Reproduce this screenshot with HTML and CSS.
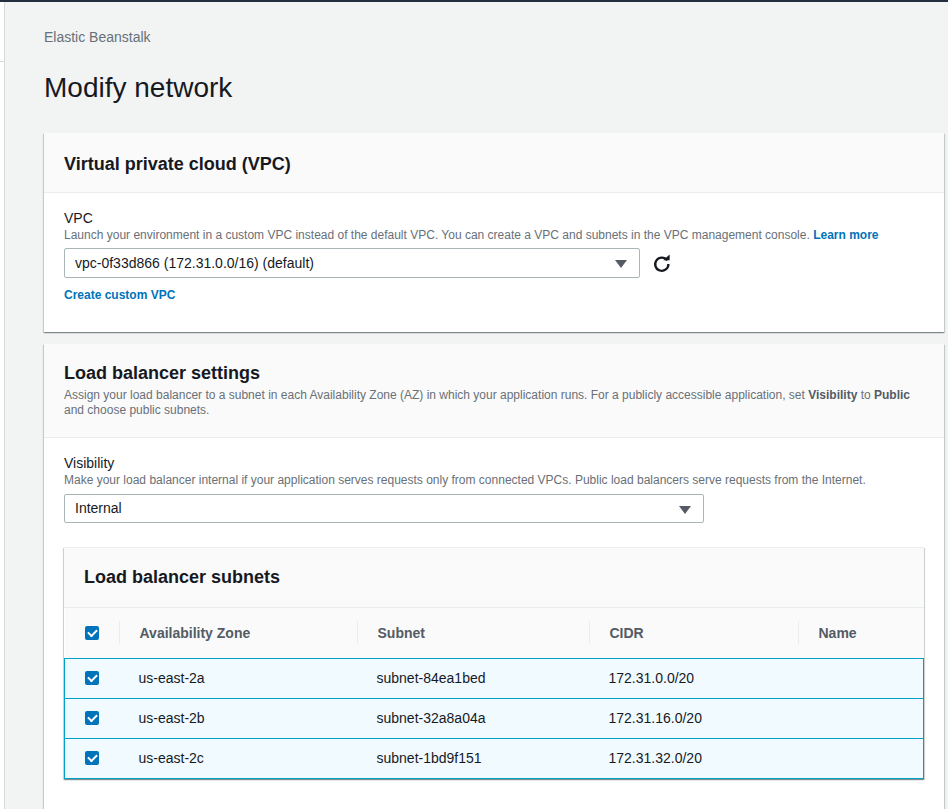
FILE: index.html
```html
<!DOCTYPE html>
<html lang="en">
<head>
<meta charset="utf-8">
<title>Modify network</title>
<link rel="stylesheet" href="styles.css">
</head>
<body>
<div class="topbar"></div>
<div class="layout">
  <aside class="sidenav"><div class="sidenav-top"></div></aside>
  <main class="main">
    <div class="breadcrumb">Elastic Beanstalk</div>
    <h1 class="page-title">Modify network</h1>

    <section class="card">
      <div class="card-header">
        <h2 class="card-title">Virtual private cloud (VPC)</h2>
      </div>
      <div class="card-body card-body-vpc">
        <div class="field-label">VPC</div>
        <div class="field-desc">Launch your environment in a custom VPC instead of the default VPC. You can create a VPC and subnets in the VPC management console. <a class="link" href="#">Learn more</a></div>
        <div class="select-row">
          <div class="select select-vpc">
            <span>vpc-0f33d866 (172.31.0.0/16) (default)</span>
            <span class="caret"></span>
          </div>
          <button class="refresh" aria-label="Refresh">
            <svg width="20" height="20" viewBox="0 0 20 20"><path d="M15.2 7.4 A6.6 6.6 0 1 0 16.4 11" fill="none" stroke="#16191f" stroke-width="2.3"/><path d="M11.2 7.2 L17.6 7.2 L17.6 1.6 Z" fill="#16191f"/></svg>
          </button>
        </div>
        <a class="link create-link" href="#">Create custom VPC</a>
      </div>
    </section>

    <section class="card card-lb">
      <div class="card-header card-header-lb">
        <h2 class="card-title">Load balancer settings</h2>
        <p class="header-desc">Assign your load balancer to a subnet in each Availability Zone (AZ) in which your application runs. For a publicly accessible application, set <b>Visibility</b> to <b>Public</b> and choose public subnets.</p>
      </div>
      <div class="card-body card-body-lb">
        <div class="field-label">Visibility</div>
        <div class="field-desc">Make your load balancer internal if your application serves requests only from connected VPCs. Public load balancers serve requests from the Internet.</div>
        <div class="select select-vis">
          <span>Internal</span>
          <span class="caret"></span>
        </div>

        <div class="subcard">
          <div class="subcard-header">
            <h3 class="card-title">Load balancer subnets</h3>
          </div>
          <table class="subnets">
            <colgroup>
              <col class="c0"><col class="c1"><col class="c2"><col class="c3"><col class="c4">
            </colgroup>
            <thead>
              <tr>
                <th class="chk"><span class="checkbox"></span></th>
                <th><span class="th-inner">Availability Zone</span></th>
                <th><span class="th-inner">Subnet</span></th>
                <th><span class="th-inner">CIDR</span></th>
                <th><span class="th-inner">Name</span></th>
              </tr>
            </thead>
            <tbody>
              <tr class="selected">
                <td class="chk"><span class="checkbox"></span></td>
                <td>us-east-2a</td>
                <td>subnet-84ea1bed</td>
                <td>172.31.0.0/20</td>
                <td></td>
              </tr>
              <tr class="selected">
                <td class="chk"><span class="checkbox"></span></td>
                <td>us-east-2b</td>
                <td>subnet-32a8a04a</td>
                <td>172.31.16.0/20</td>
                <td></td>
              </tr>
              <tr class="selected">
                <td class="chk"><span class="checkbox"></span></td>
                <td>us-east-2c</td>
                <td>subnet-1bd9f151</td>
                <td>172.31.32.0/20</td>
                <td></td>
              </tr>
            </tbody>
          </table>
        </div>
      </div>
    </section>
  </main>
</div>
</body>
</html>
```

FILE: styles.css
```css
* { box-sizing: border-box; }
html, body { margin: 0; padding: 0; }
body {
  font-family: "Liberation Sans", Arial, sans-serif;
  color: #16191f;
  background: #f2f3f3;
  font-size: 14px;
  line-height: 17px;
  overflow: hidden;
}
.topbar { height: 2px; background: #232f3e; }
.layout { display: flex; min-height: 807px; }
.sidenav {
  width: 5px;
  flex: 0 0 5px;
  background: #ffffff;
  border-right: 1px solid #d5dbdb;
}
.sidenav-top { height: 60px; border-bottom: 1px solid #d5dbdb; }
.main { flex: 1; padding: 27px 4px 0 39px; min-width: 0; }
.breadcrumb { color: #687078; font-size: 14px; line-height: 17px; }
.page-title {
  margin: 25px 0 28px;
  font-size: 28px;
  line-height: 34px;
  font-weight: 400;
  color: #16191f;
}
.card {
  background: #fff;
  box-shadow: 0 1px 1px 0 rgba(0,28,36,.3), 1px 1px 1px 0 rgba(0,28,36,.15), -1px 1px 1px 0 rgba(0,28,36,.15);
}
.card-lb { margin-top: 12px; }
.card-header {
  background: #fafafa;
  border-bottom: 1px solid #eaeded;
  padding: 20px 20px 17px;
}
.card-header-lb { padding: 18px 20px 19px; }
.card-title {
  margin: 0;
  font-size: 18px;
  line-height: 22px;
  font-weight: 700;
  color: #16191f;
}
.header-desc {
  margin: 4px 0 0;
  font-size: 12px;
  line-height: 15px;
  color: #687078;
}
.header-desc b { color: #545b64; }
.card-body { padding: 17px 20px 29px; }
.card-body-lb { padding: 17px 20px 30px; }
.field-label { font-size: 14px; line-height: 17px; }
.field-desc { font-size: 12px; line-height: 15px; color: #687078; margin-top: 1px; }
.link { color: #0073bb; font-weight: 700; text-decoration: none; font-size: 12px; }
.select-row { display: flex; align-items: center; margin-top: 5px; }
.select {
  position: relative;
  display: flex;
  align-items: center;
  height: 30px;
  border: 1px solid #aab7b8;
  border-radius: 2px;
  background: #fff;
  padding: 0 10px;
  font-size: 14px;
  color: #16191f;
}
.select-vpc { width: 576px; }
.select-vis { width: 640px; margin-top: 6px; height: 29px; }
.caret {
  position: absolute;
  right: 12px;
  top: 11px;
  width: 0; height: 0;
  border-left: 6px solid transparent;
  border-right: 6px solid transparent;
  border-top: 8px solid #545b64;
}
.refresh {
  margin-left: 12px;
  width: 20px; height: 20px;
  padding: 0;
  border: 0;
  background: none;
  display: flex; align-items: center; justify-content: center;
}
.create-link { display: block; margin-top: 10px; line-height: 15px; }
.subcard {
  margin-top: 24px;
  background: #fff;
  box-shadow: 0 1px 1px 0 rgba(0,28,36,.3), 1px 1px 1px 0 rgba(0,28,36,.15), -1px 1px 1px 0 rgba(0,28,36,.15);
  border-top: 1px solid #eaeded;
}
.subcard-header {
  background: #fafafa;
  padding: 18px 20px 19px;
  border-bottom: 1px solid #eaeded;
}
.subnets {
  width: 100%;
  border-collapse: collapse;
  table-layout: fixed;
  font-size: 14px;
}
.c0 { width: 54px; }
.c1 { width: 238px; }
.c2 { width: 232px; }
.c3 { width: 209px; }
.subnets th {
  background: #fafafa;
  height: 50px;
  padding: 0;
  text-align: left;
  font-weight: 700;
  color: #545b64;
}
.th-inner {
  display: block;
  border-left: 1px solid #eaeded;
  padding: 4px 20px 2px;
  line-height: 17px;
}
.subnets th.chk, .subnets td.chk { padding-left: 20px; padding-right: 0; }
.subnets td {
  height: 40px;
  padding: 0 20px;
  vertical-align: middle;
}
.subnets tbody tr.selected {
  background: #f1faff;
  border: 1px solid #00a1c9;
}
.checkbox {
  display: block;
  width: 14px; height: 14px;
  border-radius: 2px;
  background: #0073bb;
  position: relative;
}
.checkbox::after {
  content: "";
  position: absolute;
  left: 3px; top: 3px;
  width: 7px; height: 4px;
  border-left: 2px solid #fff;
  border-bottom: 2px solid #fff;
  transform: rotate(-45deg);
  transform-origin: center;
}
```
